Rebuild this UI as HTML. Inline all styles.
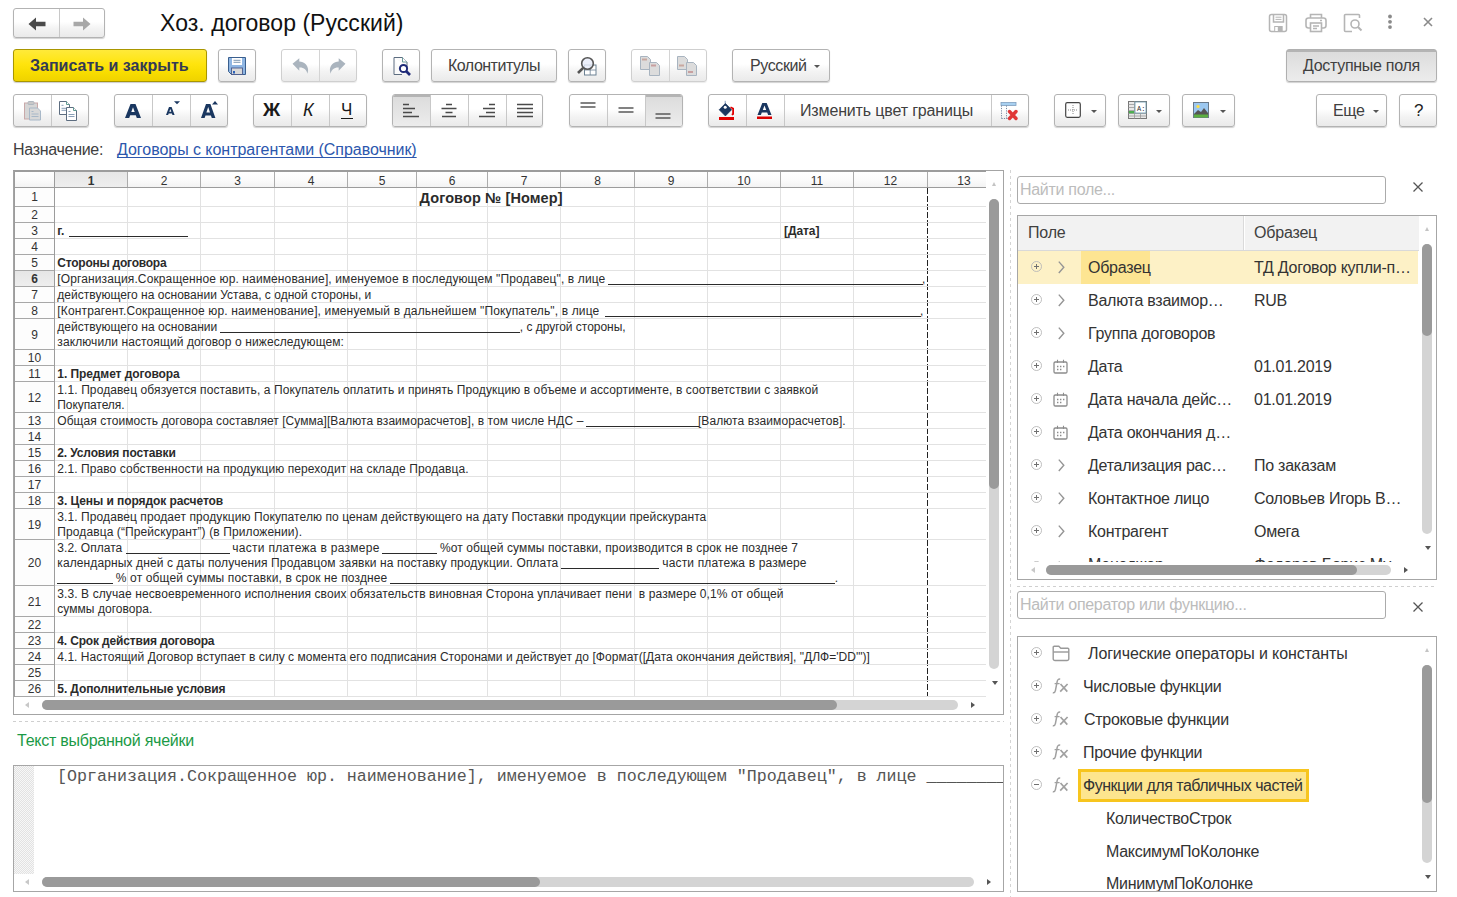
<!DOCTYPE html>
<html><head><meta charset="utf-8">
<style>
*{box-sizing:border-box}
html,body{margin:0;padding:0;background:#fff;width:1457px;height:897px;overflow:hidden;font-family:"Liberation Sans",sans-serif;color:#404040}
.a{position:absolute}
.btn{position:absolute;height:33px;top:49px;border:1px solid #b3b3b3;border-radius:3px;background:linear-gradient(#fff 0%,#fff 45%,#f3f3f3 70%,#eaeaea 100%);box-shadow:0 1px 1px rgba(0,0,0,.18);font-size:16px;color:#404040;white-space:nowrap}
.r2{top:94px}
.dv{position:absolute;top:0;bottom:0;width:1px;background:#c8c8c8}
.pr{background:linear-gradient(#b4b4b4 0,#b4b4b4 2px,#dcdcdc 2px,#e2e2e2 40%,#ececec 100%)}
.t{position:absolute;white-space:nowrap}
.dd{position:absolute;width:0;height:0;border-left:3.5px solid transparent;border-right:3.5px solid transparent;border-top:3.5px solid #555}
.c{position:absolute;white-space:pre;font-size:12px;line-height:15px;color:#2b2b2b}
.ul{position:absolute;height:1px;background:#2b2b2b}
.hn{position:absolute;height:15px;line-height:15px;font-size:12px;text-align:center;color:#333}
</style></head><body>

<!-- nav buttons -->
<div class="btn" style="left:13px;top:8px;width:92px;height:30px">
  <div class="dv" style="left:45px"></div>
  <svg class="a" style="left:13.5px;top:7.5px" width="19" height="14" viewBox="0 0 19 14"><path d="M0.5 7 L8 0.5 L8 4.7 L17.5 4.7 L17.5 9.3 L8 9.3 L8 13.5 Z" fill="#4a4a4a"/></svg>
  <svg class="a" style="left:58px;top:7.5px" width="19" height="14" viewBox="0 0 19 14"><path d="M18.5 7 L11 0.5 L11 4.7 L1.5 4.7 L1.5 9.3 L11 9.3 L11 13.5 Z" fill="#a8a8a8"/></svg>
</div>
<div class="t" style="left:160px;top:8.5px;font-size:23px;color:#111;line-height:28px;letter-spacing:0.05px">Хоз. договор (Русский)</div>

<!-- TOP RIGHT ICONS -->
<svg class="a" style="left:1268px;top:13px" width="20" height="20" viewBox="0 0 20 20" fill="none" stroke="#b5b5b5" stroke-width="1.5"><rect x="1.5" y="1.5" width="17" height="17" rx="2"/><path d="M5.5 1.5v7.5h10v-7.5"/><path d="M7.5 4.2h6M7.5 6.4h6" stroke-width="1"/><rect x="6.2" y="13" width="8.5" height="5.5" fill="#b5b5b5" stroke="none"/><rect x="7.2" y="14" width="2.6" height="4" fill="#fff" stroke="none"/></svg>
<svg class="a" style="left:1305px;top:13px" width="22" height="20" viewBox="0 0 22 20" fill="none" stroke="#b5b5b5" stroke-width="1.6"><path d="M5.5 5V1.5h11V5"/><rect x="1" y="5" width="20" height="10" rx="2.5"/><rect x="5.5" y="10" width="11" height="8.5" fill="#fff"/><path d="M8 13h6M8 15.5h4M15 7.5h2"/></svg>
<svg class="a" style="left:1343px;top:13px" width="21" height="20" viewBox="0 0 21 20" fill="none" stroke="#b5b5b5" stroke-width="1.6"><path d="M9 18.5H2.5a1 1 0 0 1-1-1V2.5a1 1 0 0 1 1-1h13a1 1 0 0 1 1 1V5"/><circle cx="12" cy="11" r="4"/><path d="M15 14l3.5 3.5" stroke-width="2"/></svg>
<svg class="a" style="left:1386px;top:14px" width="8" height="16" viewBox="0 0 8 16" fill="#8a8a8a"><circle cx="4" cy="2.5" r="1.9"/><circle cx="4" cy="7.8" r="1.9"/><circle cx="4" cy="13.1" r="1.9"/></svg>
<svg class="a" style="left:1422px;top:16px" width="12" height="12" viewBox="0 0 12 12" stroke="#8a8a8a" stroke-width="1.6"><path d="M2 2l8 8M10 2l-8 8"/></svg>

<!-- ROW 1 -->
<div class="btn" style="left:13px;width:194px;border-color:#a99600;background:linear-gradient(#ffea3a 0%,#ffe40d 45%,#f7dc00 75%,#efd200 100%);box-shadow:0 1px 1px rgba(0,0,0,.2)"></div>
<div class="t" style="left:30px;top:56px;font-size:16px;font-weight:700;color:#333a55;line-height:20px;letter-spacing:0px">Записать и закрыть</div>

<div class="btn" style="left:218px;width:38px"></div>
<svg class="a" style="left:228px;top:57px" width="18" height="18" viewBox="0 0 18 18"><path d="M0.5 0.5h17v17h-14l-3-3z" fill="#8fb6e3" stroke="#3a5f8e" stroke-width="1"/><rect x="4" y="1" width="10" height="7" fill="#fff"/><path d="M5.5 3.3h7M5.5 5.3h7" stroke="#6d8aa8" stroke-width="0.9"/><rect x="3.5" y="11" width="11" height="6.5" fill="#d9d9d9" stroke="#4a5a8a" stroke-width="0.9"/><rect x="5" y="14" width="2" height="2.5" fill="#2d62b8"/></svg>

<div class="btn" style="left:281px;width:76px;border-color:#cfcfcf;box-shadow:0 1px 1px rgba(0,0,0,.08)"><div class="dv" style="left:37px;background:#d4d4d4"></div></div>
<svg class="a" style="left:292px;top:58px" width="17" height="16" viewBox="0 0 17 16"><path d="M0.5 5.8L7.3 0.2v3.3c5 0.3 8.7 3.8 8.8 8.5c0 1.2-0.2 2.5-0.8 3.8c-0.3-3.8-3.5-6.5-8-6.3v3.3z" fill="#aab4be"/></svg>
<svg class="a" style="left:329px;top:58px" width="17" height="16" viewBox="0 0 17 16"><path d="M16.5 5.8L9.7 0.2v3.3c-5 0.3-8.7 3.8-8.8 8.5c0 1.2 0.2 2.5 0.8 3.8c0.3-3.8 3.5-6.5 8-6.3v3.3z" fill="#aab4be"/></svg>

<div class="btn" style="left:382px;width:38px"></div>
<svg class="a" style="left:393px;top:56px" width="20" height="21" viewBox="0 0 20 21"><path d="M1 1.5h8.5l4.5 4.5v5M9 18.5H1V1.5" fill="#fafafa" stroke="#5d6d80" stroke-width="1"/><path d="M9.5 1.5v4.5h4.5" fill="#fff" stroke="#6a9a9a" stroke-width="1"/><circle cx="10.5" cy="12.5" r="3.6" fill="#fff" stroke="#1e2a78" stroke-width="2"/><path d="M13 15l4 4" stroke="#1e2a78" stroke-width="2.6"/></svg>

<div class="btn" style="left:431px;width:126px"></div>
<div class="t" style="left:448px;top:57px;font-size:16px;line-height:18px;letter-spacing:-0.5px;color:#404040">Колонтитулы</div>

<div class="btn" style="left:568px;width:38px"></div>
<svg class="a" style="left:576px;top:56px" width="22" height="21" viewBox="0 0 22 21"><rect x="8.5" y="9" width="11.5" height="10" fill="#fff" stroke="#6d8294" stroke-width="1"/><path d="M14.2 9v10M8.5 14h11.5" stroke="#6d8294" stroke-width="0.8"/><circle cx="11.5" cy="7.5" r="5.8" fill="#e8ecfa" fill-opacity=".8" stroke="#555" stroke-width="1.6"/><path d="M7.2 11.8L2 17" stroke="#555" stroke-width="2.6"/></svg>

<div class="btn" style="left:631px;width:76px;border-color:#cfcfcf;box-shadow:0 1px 1px rgba(0,0,0,.08)"><div class="dv" style="left:37px;background:#d4d4d4"></div></div>
<svg class="a" style="left:640px;top:56px" width="21" height="21" viewBox="0 0 21 21"><path d="M0.5 0.5h7l3 3v10h-10z" fill="#dcdcdc" stroke="#a8b4c0"/><rect x="2" y="2.5" width="5" height="2" fill="#c8a8a0"/><path d="M9.5 6.5h7l3 3v10h-10z" fill="#dcdcdc" stroke="#a8b4c0"/><rect x="11" y="8.5" width="5" height="2" fill="#c8a0a0"/></svg>
<svg class="a" style="left:677px;top:56px" width="21" height="21" viewBox="0 0 21 21"><path d="M0.5 0.5h7l3 3v10h-10z" fill="#dcdcdc" stroke="#a8b4c0"/><rect x="2" y="8.5" width="5" height="2" fill="#c8a8a0"/><path d="M9.5 6.5h7l3 3v10h-10z" fill="#dcdcdc" stroke="#a8b4c0"/><rect x="11" y="15" width="5" height="2" fill="#c8a0a0"/></svg>

<div class="btn" style="left:732px;width:98px"></div>
<div class="t" style="left:750px;top:57px;font-size:16px;line-height:18px;letter-spacing:-0.4px;color:#404040">Русский</div>
<div class="dd" style="left:814px;top:65px"></div>

<div class="btn pr" style="left:1286px;width:151px;border-color:#b0b0b0"></div>
<div class="t" style="left:1303px;top:57px;font-size:16px;line-height:18px;letter-spacing:-0.3px;color:#404040">Доступные поля</div>

<!-- ROW 2 -->
<div class="btn r2" style="left:13px;width:76px"><div class="dv" style="left:37px"></div></div>
<svg class="a" style="left:24px;top:101px" width="18" height="20" viewBox="0 0 18 20"><rect x="0.5" y="2" width="13" height="16" fill="#d6d6d6" stroke="#c9a9a9"/><rect x="4" y="0.5" width="6" height="3" rx="1" fill="#c8c8c8" stroke="#b0b8c0"/><path d="M5.5 7h8l3 3v9h-11z" fill="#d8d8d8" stroke="#a8b8c8"/><path d="M7.5 13h7M7.5 15.5h7M7.5 10.5h2" stroke="#a8b8c8"/></svg>
<svg class="a" style="left:59px;top:101px" width="20" height="20" viewBox="0 0 20 20"><path d="M0.5 0.5h7l3 3v10h-10z" fill="#fff" stroke="#5d6d80"/><path d="M7.5 0.5v3h3" fill="#fff" stroke="#5f9a90"/><path d="M2.5 4.3h2M2.5 7.3h5M2.5 9.3h5" stroke="#8aa0b8"/><path d="M7.5 6.5h7l3 3v10h-10z" fill="#fff" stroke="#5d6d80"/><path d="M14.5 6.5v3h3" fill="#fff" stroke="#5f9a90"/><path d="M9.5 10.5h2M9.5 13.5h6M9.5 15.5h6" stroke="#8aa0b8"/></svg>

<div class="btn r2" style="left:114px;width:114px"><div class="dv" style="left:37px"></div><div class="dv" style="left:75px"></div></div>
<svg class="a" style="left:124px;top:103px" width="18" height="16" viewBox="0 0 18 16"><path d="M1 15L6.5 1h5L17 15h-4.2l-1-2.8H6.2L5.2 15z M7.3 9h3.4L9 4.3z" fill="#1a3760" fill-rule="evenodd"/></svg>
<svg class="a" style="left:165px;top:100px" width="16" height="16" viewBox="0 0 16 16"><path d="M1 15L4 7h2.6l3 8H7.5l-.6-1.6H3.7L3.1 15z M4.3 11.8h2L5.3 9z" fill="#1a3760" fill-rule="evenodd"/><path d="M9 1.2h6l-3 3z" fill="#1a3760"/></svg>
<svg class="a" style="left:200px;top:100px" width="19" height="19" viewBox="0 0 19 19"><path d="M1 18L6 4h4.4L15.4 18h-3.6l-.9-2.6H5.5L4.6 18z M6.4 12.4h3.6L8.2 7z" fill="#1a3760" fill-rule="evenodd"/><path d="M12 4.5l3-3.4l3 3.4z" fill="#1a3760"/></svg>

<div class="btn r2" style="left:253px;width:114px"><div class="dv" style="left:37px"></div><div class="dv" style="left:75px"></div></div>
<div class="t" style="left:263px;top:100px;font-size:19px;font-weight:700;color:#1a1a1a;line-height:20px">Ж</div>
<div class="t" style="left:303px;top:100px;font-size:18px;font-style:italic;color:#1a1a1a;line-height:20px">К</div>
<div class="t" style="left:341px;top:100px;font-size:17px;color:#1a1a1a;line-height:20px">Ч</div>
<div class="a" style="left:341px;top:117.5px;width:12px;height:1.6px;background:#1a1a1a"></div>

<div class="btn r2" style="left:392px;width:151px"><div class="a pr" style="left:0;top:0;width:37px;height:31px;border-radius:2px 0 0 2px"></div><div class="dv" style="left:37px"></div><div class="dv" style="left:75px"></div><div class="dv" style="left:113px"></div></div>
<svg class="a" style="left:401px;top:103px" width="20" height="16" viewBox="0 0 20 16" stroke="#4a4a4a" stroke-width="1.5"><path d="M2 1.5h6M2 5.5h12M2 9.5h9M2 13.5h16"/></svg>
<svg class="a" style="left:439px;top:103px" width="20" height="16" viewBox="0 0 20 16" stroke="#4a4a4a" stroke-width="1.5"><path d="M7 1.5h6M2.5 5.5h15M6.5 9.5h7M3 13.5h14"/></svg>
<svg class="a" style="left:477px;top:103px" width="20" height="16" viewBox="0 0 20 16" stroke="#4a4a4a" stroke-width="1.5"><path d="M12 1.5h6M6 5.5h12M9 9.5h9M2 13.5h16"/></svg>
<svg class="a" style="left:515px;top:103px" width="20" height="16" viewBox="0 0 20 16" stroke="#4a4a4a" stroke-width="1.5"><path d="M2 1.5h16M2 5.5h16M2 9.5h16M2 13.5h16"/></svg>

<div class="btn r2" style="left:569px;width:114px"><div class="a pr" style="left:76px;top:0;width:36px;height:31px;border-radius:0 2px 2px 0"></div><div class="dv" style="left:37px"></div><div class="dv" style="left:75px"></div></div>
<svg class="a" style="left:580px;top:102px" width="16" height="7" viewBox="0 0 16 7" stroke="#5a5a5a" stroke-width="1.3"><path d="M0.5 1h15M0.5 5h15"/></svg>
<svg class="a" style="left:618px;top:107px" width="16" height="7" viewBox="0 0 16 7" stroke="#5a5a5a" stroke-width="1.3"><path d="M0.5 1h15M0.5 5h15"/></svg>
<svg class="a" style="left:655px;top:113px" width="16" height="7" viewBox="0 0 16 7" stroke="#5a5a5a" stroke-width="1.3"><path d="M0.5 1h15M0.5 5h15"/></svg>

<div class="btn r2" style="left:708px;width:321px"><div class="dv" style="left:37px"></div><div class="dv" style="left:75px"></div><div class="dv" style="left:282px"></div></div>
<svg class="a" style="left:717px;top:100px" width="20" height="21" viewBox="0 0 20 21"><path d="M8.2 0.8v3" stroke="#8aa0c0" stroke-width="1"/><path d="M8.4 3.5L14.6 9.7L8.4 15.9L2.2 9.7z" fill="#1a3760" stroke="#1a3760" stroke-width="0.8" stroke-linejoin="round"/><circle cx="8.2" cy="7.3" r="1.5" fill="#fff"/><path d="M13.5 7.2l2.6 1.3v5.5l-1.3 0.8" stroke="#e00000" stroke-width="1.8" fill="none"/><rect x="2" y="17" width="15" height="3" fill="#e00000"/></svg>
<svg class="a" style="left:756px;top:101px" width="17" height="19" viewBox="0 0 17 19"><path d="M1.5 14L6.3 2h4.4l4.8 12h-3.4l-.9-2.4H5.8L4.9 14z M6.8 9h3.4L8.5 4.6z" fill="#1a3760" fill-rule="evenodd"/><rect x="1" y="15.5" width="15" height="2.5" fill="#d90000"/></svg>
<div class="t" style="left:800px;top:102px;font-size:16px;line-height:18px;letter-spacing:-0.15px;color:#404040">Изменить цвет границы</div>
<svg class="a" style="left:999px;top:101px" width="22" height="21" viewBox="0 0 22 21"><rect x="2" y="1.5" width="15" height="3" fill="#a8d0f0" stroke="#7f9fbf" stroke-width="0.8"/><path d="M2.5 4.5v13M7.5 4.5v13M2.5 17.5h7" stroke="#7a8aa0" stroke-width="1" stroke-dasharray="1.2 1.2"/><path d="M10.5 10.5l6.5 7M17 10.5l-6.5 7" stroke="#e03838" stroke-width="3.4" stroke-linecap="round"/></svg>

<div class="btn r2" style="left:1054px;width:52px"></div>
<svg class="a" style="left:1065px;top:102px" width="16" height="16" viewBox="0 0 16 16"><rect x="0.7" y="0.7" width="14.6" height="14.6" rx="1.5" fill="#fff" stroke="#444" stroke-width="1.2"/><path d="M8 3v10M3 8h10" stroke="#888" stroke-width="1" stroke-dasharray="1 1"/></svg>
<div class="dd" style="left:1091px;top:110px"></div>

<div class="btn r2" style="left:1118px;width:52px"></div>
<svg class="a" style="left:1128px;top:101px" width="19" height="18" viewBox="0 0 19 18"><rect x="0.5" y="0.5" width="18" height="17" fill="#e8e8e8" stroke="#777" stroke-width="1"/><path d="M0.5 3.5h6M0.5 6.5h6M0.5 9.5h6M0.5 12.5h18M0.5 15h18M6.5 0.5v17M12.5 12.5v5" stroke="#999" stroke-width="0.8"/><rect x="7" y="1" width="11" height="11" fill="#fff" stroke="#6a9ab0" stroke-width="0.8"/><text x="9" y="9.5" font-size="7" font-family="Liberation Mono" fill="#333">A:</text><rect x="1" y="10" width="5" height="2.3" fill="#4caf50"/></svg>
<div class="dd" style="left:1156px;top:110px"></div>

<div class="btn r2" style="left:1182px;width:53px"></div>
<svg class="a" style="left:1193px;top:102px" width="16" height="16" viewBox="0 0 16 16"><rect x="0.5" y="0.5" width="15" height="15" fill="#9cc8f0" stroke="#6a7a8a" stroke-width="1"/><circle cx="5" cy="4.5" r="1.6" fill="#ffe040"/><path d="M1 12l4-4 3 2 3-4 4 5v2H1z" fill="#555"/><rect x="1" y="12.5" width="14" height="3" fill="#5cb040"/></svg>
<div class="dd" style="left:1220px;top:110px"></div>

<div class="btn r2" style="left:1316px;width:71px"></div>
<div class="t" style="left:1333px;top:102px;font-size:16px;line-height:18px;color:#404040;letter-spacing:-0.3px">Еще</div>
<div class="dd" style="left:1373px;top:110px"></div>

<div class="btn r2" style="left:1399px;width:38px"></div>
<div class="t" style="left:1414px;top:101px;font-size:17px;line-height:20px;color:#222">?</div>

<!-- Назначение -->
<div class="t" style="left:13px;top:141px;font-size:16px;line-height:18px;letter-spacing:-0.3px;color:#404040">Назначение:</div>
<div class="t" style="left:117px;top:141px;font-size:16px;line-height:18px;letter-spacing:-0.04px;color:#2c57ad;text-decoration:underline;text-decoration-skip-ink:none;text-underline-offset:2px;text-decoration-thickness:1px">Договоры с контрагентами (Справочник)</div>

<div class="a" style="left:13px;top:170px;width:991px;height:545px;border:1px solid #a4a4a4"></div>
<div class="a" style="left:14px;top:171px;width:972px;height:1px;background:#9c9c9c"></div>
<div class="a" style="left:14px;top:171px;width:1px;height:526px;background:#9c9c9c"></div>
<div class="a" style="left:13px;top:170px;width:973px;height:1px;background:#9c9c9c"></div>
<div class="a" style="left:15px;top:172px;width:971px;height:15px;background:linear-gradient(#fff,#fafafa 60%,#f3f3f3)"></div>
<div class="a" style="left:55px;top:172px;width:72px;height:15px;background:linear-gradient(#e6e6e6,#eeeeee)"></div>
<div class="a" style="left:15px;top:188px;width:39px;height:508px;background:#fdfdfd"></div>
<div class="a" style="left:15px;top:271px;width:39px;height:15px;background:linear-gradient(#e6e6e6,#eeeeee)"></div>
<div class="a" style="left:127px;top:188px;width:1px;height:509px;background:#e2e2e2"></div>
<div class="a" style="left:200px;top:188px;width:1px;height:509px;background:#e2e2e2"></div>
<div class="a" style="left:274px;top:188px;width:1px;height:509px;background:#e2e2e2"></div>
<div class="a" style="left:347px;top:188px;width:1px;height:509px;background:#e2e2e2"></div>
<div class="a" style="left:416px;top:188px;width:1px;height:509px;background:#e2e2e2"></div>
<div class="a" style="left:487px;top:188px;width:1px;height:509px;background:#e2e2e2"></div>
<div class="a" style="left:560px;top:188px;width:1px;height:509px;background:#e2e2e2"></div>
<div class="a" style="left:634px;top:188px;width:1px;height:509px;background:#e2e2e2"></div>
<div class="a" style="left:707px;top:188px;width:1px;height:509px;background:#e2e2e2"></div>
<div class="a" style="left:780px;top:188px;width:1px;height:509px;background:#e2e2e2"></div>
<div class="a" style="left:853px;top:188px;width:1px;height:509px;background:#e2e2e2"></div>
<div class="a" style="left:927px;top:188px;width:1px;height:509px;background:repeating-linear-gradient(#222 0 6px,transparent 6px 8px)"></div>
<div class="a" style="left:55px;top:206px;width:931px;height:1px;background:#e2e2e2"></div>
<div class="a" style="left:15px;top:206px;width:39px;height:1px;background:#a8a8a8"></div>
<div class="a" style="left:55px;top:222px;width:931px;height:1px;background:#e2e2e2"></div>
<div class="a" style="left:15px;top:222px;width:39px;height:1px;background:#a8a8a8"></div>
<div class="a" style="left:55px;top:238px;width:931px;height:1px;background:#e2e2e2"></div>
<div class="a" style="left:15px;top:238px;width:39px;height:1px;background:#a8a8a8"></div>
<div class="a" style="left:55px;top:254px;width:931px;height:1px;background:#e2e2e2"></div>
<div class="a" style="left:15px;top:254px;width:39px;height:1px;background:#a8a8a8"></div>
<div class="a" style="left:55px;top:270px;width:931px;height:1px;background:#e2e2e2"></div>
<div class="a" style="left:15px;top:270px;width:39px;height:1px;background:#a8a8a8"></div>
<div class="a" style="left:55px;top:286px;width:931px;height:1px;background:#e2e2e2"></div>
<div class="a" style="left:15px;top:286px;width:39px;height:1px;background:#a8a8a8"></div>
<div class="a" style="left:55px;top:302px;width:931px;height:1px;background:#e2e2e2"></div>
<div class="a" style="left:15px;top:302px;width:39px;height:1px;background:#a8a8a8"></div>
<div class="a" style="left:55px;top:318px;width:931px;height:1px;background:#e2e2e2"></div>
<div class="a" style="left:15px;top:318px;width:39px;height:1px;background:#a8a8a8"></div>
<div class="a" style="left:55px;top:349px;width:931px;height:1px;background:#e2e2e2"></div>
<div class="a" style="left:15px;top:349px;width:39px;height:1px;background:#a8a8a8"></div>
<div class="a" style="left:55px;top:365px;width:931px;height:1px;background:#e2e2e2"></div>
<div class="a" style="left:15px;top:365px;width:39px;height:1px;background:#a8a8a8"></div>
<div class="a" style="left:55px;top:381px;width:931px;height:1px;background:#e2e2e2"></div>
<div class="a" style="left:15px;top:381px;width:39px;height:1px;background:#a8a8a8"></div>
<div class="a" style="left:55px;top:412px;width:931px;height:1px;background:#e2e2e2"></div>
<div class="a" style="left:15px;top:412px;width:39px;height:1px;background:#a8a8a8"></div>
<div class="a" style="left:55px;top:428px;width:931px;height:1px;background:#e2e2e2"></div>
<div class="a" style="left:15px;top:428px;width:39px;height:1px;background:#a8a8a8"></div>
<div class="a" style="left:55px;top:444px;width:931px;height:1px;background:#e2e2e2"></div>
<div class="a" style="left:15px;top:444px;width:39px;height:1px;background:#a8a8a8"></div>
<div class="a" style="left:55px;top:460px;width:931px;height:1px;background:#e2e2e2"></div>
<div class="a" style="left:15px;top:460px;width:39px;height:1px;background:#a8a8a8"></div>
<div class="a" style="left:55px;top:476px;width:931px;height:1px;background:#e2e2e2"></div>
<div class="a" style="left:15px;top:476px;width:39px;height:1px;background:#a8a8a8"></div>
<div class="a" style="left:55px;top:492px;width:931px;height:1px;background:#e2e2e2"></div>
<div class="a" style="left:15px;top:492px;width:39px;height:1px;background:#a8a8a8"></div>
<div class="a" style="left:55px;top:508px;width:931px;height:1px;background:#e2e2e2"></div>
<div class="a" style="left:15px;top:508px;width:39px;height:1px;background:#a8a8a8"></div>
<div class="a" style="left:55px;top:539px;width:931px;height:1px;background:#e2e2e2"></div>
<div class="a" style="left:15px;top:539px;width:39px;height:1px;background:#a8a8a8"></div>
<div class="a" style="left:55px;top:585px;width:931px;height:1px;background:#e2e2e2"></div>
<div class="a" style="left:15px;top:585px;width:39px;height:1px;background:#a8a8a8"></div>
<div class="a" style="left:55px;top:616px;width:931px;height:1px;background:#e2e2e2"></div>
<div class="a" style="left:15px;top:616px;width:39px;height:1px;background:#a8a8a8"></div>
<div class="a" style="left:55px;top:632px;width:931px;height:1px;background:#e2e2e2"></div>
<div class="a" style="left:15px;top:632px;width:39px;height:1px;background:#a8a8a8"></div>
<div class="a" style="left:55px;top:648px;width:931px;height:1px;background:#e2e2e2"></div>
<div class="a" style="left:15px;top:648px;width:39px;height:1px;background:#a8a8a8"></div>
<div class="a" style="left:55px;top:664px;width:931px;height:1px;background:#e2e2e2"></div>
<div class="a" style="left:15px;top:664px;width:39px;height:1px;background:#a8a8a8"></div>
<div class="a" style="left:55px;top:680px;width:931px;height:1px;background:#e2e2e2"></div>
<div class="a" style="left:15px;top:680px;width:39px;height:1px;background:#a8a8a8"></div>
<div class="a" style="left:55px;top:696px;width:931px;height:1px;background:#e2e2e2"></div>
<div class="a" style="left:15px;top:696px;width:39px;height:1px;background:#a8a8a8"></div>
<div class="a" style="left:127px;top:172px;width:1px;height:15px;background:#acacac"></div>
<div class="a" style="left:200px;top:172px;width:1px;height:15px;background:#acacac"></div>
<div class="a" style="left:274px;top:172px;width:1px;height:15px;background:#acacac"></div>
<div class="a" style="left:347px;top:172px;width:1px;height:15px;background:#acacac"></div>
<div class="a" style="left:416px;top:172px;width:1px;height:15px;background:#acacac"></div>
<div class="a" style="left:487px;top:172px;width:1px;height:15px;background:#acacac"></div>
<div class="a" style="left:560px;top:172px;width:1px;height:15px;background:#acacac"></div>
<div class="a" style="left:634px;top:172px;width:1px;height:15px;background:#acacac"></div>
<div class="a" style="left:707px;top:172px;width:1px;height:15px;background:#acacac"></div>
<div class="a" style="left:780px;top:172px;width:1px;height:15px;background:#acacac"></div>
<div class="a" style="left:853px;top:172px;width:1px;height:15px;background:#acacac"></div>
<div class="a" style="left:927px;top:172px;width:1px;height:15px;background:#acacac"></div>
<div class="a" style="left:15px;top:187px;width:971px;height:1px;background:#9c9c9c"></div>
<div class="a" style="left:54px;top:172px;width:1px;height:525px;background:#9c9c9c"></div>
<div class="hn" style="left:55px;width:72px;top:174px;font-weight:700">1</div>
<div class="hn" style="left:128px;width:72px;top:174px">2</div>
<div class="hn" style="left:201px;width:73px;top:174px">3</div>
<div class="hn" style="left:275px;width:72px;top:174px">4</div>
<div class="hn" style="left:348px;width:68px;top:174px">5</div>
<div class="hn" style="left:417px;width:70px;top:174px">6</div>
<div class="hn" style="left:488px;width:72px;top:174px">7</div>
<div class="hn" style="left:561px;width:73px;top:174px">8</div>
<div class="hn" style="left:635px;width:72px;top:174px">9</div>
<div class="hn" style="left:708px;width:72px;top:174px">10</div>
<div class="hn" style="left:781px;width:72px;top:174px">11</div>
<div class="hn" style="left:854px;width:73px;top:174px">12</div>
<div class="hn" style="left:928px;width:72px;top:174px">13</div>
<div class="hn" style="left:15px;width:39px;top:188px;height:18px;line-height:18px">1</div>
<div class="hn" style="left:15px;width:39px;top:208px;height:15px;line-height:15px">2</div>
<div class="hn" style="left:15px;width:39px;top:224px;height:15px;line-height:15px">3</div>
<div class="hn" style="left:15px;width:39px;top:240px;height:15px;line-height:15px">4</div>
<div class="hn" style="left:15px;width:39px;top:256px;height:15px;line-height:15px">5</div>
<div class="hn" style="left:15px;width:39px;top:272px;height:15px;line-height:15px;font-weight:700">6</div>
<div class="hn" style="left:15px;width:39px;top:288px;height:15px;line-height:15px">7</div>
<div class="hn" style="left:15px;width:39px;top:304px;height:15px;line-height:15px">8</div>
<div class="hn" style="left:15px;width:39px;top:320px;height:30px;line-height:30px">9</div>
<div class="hn" style="left:15px;width:39px;top:351px;height:15px;line-height:15px">10</div>
<div class="hn" style="left:15px;width:39px;top:367px;height:15px;line-height:15px">11</div>
<div class="hn" style="left:15px;width:39px;top:383px;height:30px;line-height:30px">12</div>
<div class="hn" style="left:15px;width:39px;top:414px;height:15px;line-height:15px">13</div>
<div class="hn" style="left:15px;width:39px;top:430px;height:15px;line-height:15px">14</div>
<div class="hn" style="left:15px;width:39px;top:446px;height:15px;line-height:15px">15</div>
<div class="hn" style="left:15px;width:39px;top:462px;height:15px;line-height:15px">16</div>
<div class="hn" style="left:15px;width:39px;top:478px;height:15px;line-height:15px">17</div>
<div class="hn" style="left:15px;width:39px;top:494px;height:15px;line-height:15px">18</div>
<div class="hn" style="left:15px;width:39px;top:510px;height:30px;line-height:30px">19</div>
<div class="hn" style="left:15px;width:39px;top:541px;height:45px;line-height:45px">20</div>
<div class="hn" style="left:15px;width:39px;top:587px;height:30px;line-height:30px">21</div>
<div class="hn" style="left:15px;width:39px;top:618px;height:15px;line-height:15px">22</div>
<div class="hn" style="left:15px;width:39px;top:634px;height:15px;line-height:15px">23</div>
<div class="hn" style="left:15px;width:39px;top:650px;height:15px;line-height:15px">24</div>
<div class="hn" style="left:15px;width:39px;top:666px;height:15px;line-height:15px">25</div>
<div class="hn" style="left:15px;width:39px;top:682px;height:15px;line-height:15px">26</div>
<div class="a" style="left:989px;top:199px;width:10px;height:470px;border-radius:5px;background:#d4d4d4"></div>
<div class="a" style="left:989px;top:199px;width:10px;height:290px;border-radius:5px;background:#9a9a9a"></div>
<div class="a" style="left:992px;top:182px;width:0;height:0;border-left:2.5px solid transparent;border-right:2.5px solid transparent;border-bottom:4.5px solid #c4c4c4"></div>
<div class="a" style="left:992px;top:681px;width:0;height:0;border-left:3px solid transparent;border-right:3px solid transparent;border-top:4px solid #555"></div>
<div class="a" style="left:42px;top:700px;width:916px;height:10px;border-radius:5px;background:#d4d4d4"></div>
<div class="a" style="left:42px;top:700px;width:795px;height:10px;border-radius:5px;background:#9a9a9a"></div>
<div class="a" style="left:25px;top:702px;width:0;height:0;border-top:3px solid transparent;border-bottom:3px solid transparent;border-right:4px solid #c8c8c8"></div>
<div class="a" style="left:971px;top:702px;width:0;height:0;border-top:3px solid transparent;border-bottom:3px solid transparent;border-left:4px solid #555"></div>
<div class="c" style="left:419.6px;top:191.2px;font-weight:700;font-size:14.5px;letter-spacing:0.114px">Договор № [Номер]</div>
<div class="c" style="left:57.3px;top:224.0px;font-weight:700">г.</div>
<div class="c" style="left:784.1px;top:224.0px;font-weight:700;letter-spacing:-0.093px">[Дата]</div>
<div class="c" style="left:57.3px;top:256.0px;font-weight:700;letter-spacing:-0.238px">Стороны договора</div>
<div class="c" style="left:57.3px;top:272.0px;letter-spacing:0.117px">[Организация.Сокращенное юр. наименование], именуемое в последующем "Продавец", в лице</div>
<div class="c" style="left:922.1px;top:272.0px">,</div>
<div class="c" style="left:57.3px;top:288.0px;letter-spacing:0.021px">действующего на основании Устава, с одной стороны, и</div>
<div class="c" style="left:57.3px;top:304.0px;letter-spacing:0.142px">[Контрагент.Сокращенное юр. наименование], именуемый в дальнейшем "Покупатель", в лице</div>
<div class="c" style="left:920.0px;top:304.0px">,</div>
<div class="c" style="left:57.3px;top:320.0px;letter-spacing:0.038px">действующего на основании</div>
<div class="c" style="left:519.8px;top:320.0px;letter-spacing:-0.030px">, с другой стороны,</div>
<div class="c" style="left:57.3px;top:335.0px;letter-spacing:0.094px">заключили настоящий договор о нижеследующем:</div>
<div class="c" style="left:57.3px;top:367.0px;font-weight:700;letter-spacing:-0.076px">1. Предмет договора</div>
<div class="c" style="left:57.3px;top:383.0px;letter-spacing:0.100px">1.1. Продавец обязуется поставить, а Покупатель оплатить и принять Продукцию в объеме и ассортименте, в соответствии с заявкой</div>
<div class="c" style="left:57.3px;top:398.0px;letter-spacing:-0.086px">Покупателя.</div>
<div class="c" style="left:57.3px;top:414.0px;letter-spacing:0.055px">Общая стоимость договора составляет [Сумма][Валюта взаиморасчетов], в том числе НДС –</div>
<div class="c" style="left:697.9px;top:414.0px;letter-spacing:0.079px">[Валюта взаиморасчетов].</div>
<div class="c" style="left:57.3px;top:446.0px;font-weight:700;letter-spacing:-0.140px">2. Условия поставки</div>
<div class="c" style="left:57.3px;top:462.0px;letter-spacing:0.082px">2.1. Право собственности на продукцию переходит на складе Продавца.</div>
<div class="c" style="left:57.3px;top:494.0px;font-weight:700;letter-spacing:-0.076px">3. Цены и порядок расчетов</div>
<div class="c" style="left:57.3px;top:510.0px;letter-spacing:0.086px">3.1. Продавец продает продукцию Покупателю по ценам действующего на дату Поставки продукции прейскуранта</div>
<div class="c" style="left:57.3px;top:525.0px;letter-spacing:0.100px">Продавца (“Прейскурант”) (в Приложении).</div>
<div class="c" style="left:57.3px;top:541.0px;letter-spacing:0.036px">3.2. Оплата</div>
<div class="c" style="left:232.3px;top:541.0px;letter-spacing:0.273px">части платежа в размере</div>
<div class="c" style="left:439.9px;top:541.0px;letter-spacing:0.113px">%от общей суммы поставки, производится в срок не позднее 7</div>
<div class="c" style="left:57.3px;top:556.0px;letter-spacing:0.113px">календарных дней с даты получения Продавцом заявки на поставку продукции. Оплата</div>
<div class="c" style="left:662.3px;top:556.0px;letter-spacing:0.145px">части платежа в размере</div>
<div class="c" style="left:115.8px;top:571.0px;letter-spacing:0.144px">% от общей суммы поставки, в срок не позднее</div>
<div class="c" style="left:834.8px;top:571.0px">.</div>
<div class="c" style="left:57.3px;top:587.0px;letter-spacing:0.094px">3.3. В случае несвоевременного исполнения своих обязательств виновная Сторона уплачивает пени  в размере 0,1% от общей</div>
<div class="c" style="left:57.3px;top:602.0px;letter-spacing:0.044px">суммы договора.</div>
<div class="c" style="left:57.3px;top:634.0px;font-weight:700;letter-spacing:-0.158px">4. Срок действия договора</div>
<div class="c" style="left:57.3px;top:650.0px;letter-spacing:0.036px">4.1. Настоящий Договор вступает в силу с момента его подписания Сторонами и действует до [Формат([Дата окончания действия], "ДЛФ='DD'")]</div>
<div class="c" style="left:57.3px;top:682.0px;font-weight:700;letter-spacing:-0.094px">5. Дополнительные условия</div>
<div class="ul" style="left:68.7px;top:236px;width:119.3px"></div>
<div class="ul" style="left:608.0px;top:284px;width:314.8px"></div>
<div class="ul" style="left:604.8px;top:316px;width:315.9px"></div>
<div class="ul" style="left:220.2px;top:332px;width:300.3px"></div>
<div class="ul" style="left:586.1px;top:426px;width:112.5px"></div>
<div class="ul" style="left:125.5px;top:553px;width:104.3px"></div>
<div class="ul" style="left:382.2px;top:553px;width:54.6px"></div>
<div class="ul" style="left:561.4px;top:568px;width:97.4px"></div>
<div class="ul" style="left:56.9px;top:583px;width:56.2px"></div>
<div class="ul" style="left:390.4px;top:583px;width:445.1px"></div>
<!-- horizontal dashed separator below sheet -->
<div class="a" style="left:13px;top:721px;width:991px;height:1px;background:repeating-linear-gradient(90deg,#cfcfcf 0 3px,transparent 3px 6px)"></div>
<div class="t" style="left:17px;top:732px;font-size:16px;line-height:18px;color:#1b9a46;letter-spacing:-0.25px">Текст выбранной ячейки</div>
<!-- text area -->
<div class="a" style="left:13px;top:765px;width:991px;height:127px;border:1px solid #a6a6a6;overflow:hidden">
  <div class="a" style="left:0;top:0;width:20px;height:108px;background:repeating-conic-gradient(#e2e2e2 0 25%,#f7f7f7 0 50%) 0 0/2px 2px"></div>
  <div class="a" style="left:43px;top:1px;white-space:pre;font-family:'Liberation Mono',monospace;font-size:16.67px;line-height:20px;color:#555">[Организация.Сокращенное юр. наименование], именуемое в последующем "Продавец", в лице ______________________</div>
  <div class="a" style="left:28px;top:111px;width:932px;height:10px;border-radius:5px;background:#d4d4d4"></div>
  <div class="a" style="left:28px;top:111px;width:498px;height:10px;border-radius:5px;background:#9a9a9a"></div>
  <div class="a" style="left:11px;top:113px;width:0;height:0;border-top:3px solid transparent;border-bottom:3px solid transparent;border-right:4px solid #c8c8c8"></div>
  <div class="a" style="left:973px;top:113px;width:0;height:0;border-top:3px solid transparent;border-bottom:3px solid transparent;border-left:4px solid #555"></div>
</div>
<!-- vertical dashed separator -->
<div class="a" style="left:1010px;top:170px;width:1px;height:727px;background:repeating-linear-gradient(#d4d4d4 0 3px,transparent 3px 6px)"></div>

<div class="a" style="left:1017px;top:176px;width:369px;height:28px;border:1px solid #ababab;border-radius:3px;background:#fff"></div>
<div class="t" style="left:1020px;top:180px;font-size:16px;line-height:20px;color:#bcbcbc;letter-spacing:-0.3px">Найти поле...</div>
<svg class="a" style="left:1412px;top:181px" width="12" height="12" viewBox="0 0 12 12" stroke="#555" stroke-width="1.3"><path d="M1.5 1.5l9 9M10.5 1.5l-9 9"/></svg>
<div class="a" style="left:1017px;top:215px;width:420px;height:365px;border:1px solid #a6a6a6;background:#fff;overflow:hidden"><div class="a" style="left:0;top:0;width:401px;height:34px;background:#f2f2f2"></div><div class="a" style="left:0;top:34px;width:401px;height:1px;background:#d9d9d9"></div><div class="a" style="left:225px;top:0;width:1px;height:34px;background:#dadada"></div><div class="a" style="left:226px;top:0;width:1px;height:34px;background:#fff"></div></div>
<div class="t" style="left:1028px;top:223px;font-size:16px;line-height:20px;color:#404040;letter-spacing:-0.2px">Поле</div>
<div class="t" style="left:1254px;top:223px;font-size:16px;line-height:20px;color:#404040;letter-spacing:-0.2px">Образец</div>
<div class="a" style="left:1018px;top:251px;width:400px;height:33px;background:#fdf1c6"></div>
<div class="a" style="left:1081px;top:251px;width:69px;height:33px;background:#fde592"></div>
<svg class="a" style="left:1030px;top:260px" width="12" height="12" viewBox="0 0 12 12"><circle cx="6.5" cy="6.5" r="5" fill="none" stroke="#b8b8b8" stroke-width="0.9"/><path d="M4 6.5h5M6.5 4v5" stroke="#707070" stroke-width="1"/></svg>
<svg class="a" style="left:1057px;top:261px" width="9" height="13" viewBox="0 0 9 13"><path d="M1.8 0.6L6.8 6.3L1.8 12" fill="none" stroke="#959595" stroke-width="1.4"/></svg>
<div class="t" style="left:1088px;top:258px;font-size:16px;line-height:20px;color:#333;letter-spacing:-0.25px">Образец</div>
<div class="t" style="left:1254px;top:258px;font-size:16px;line-height:20px;color:#333;letter-spacing:-0.25px">ТД Договор купли-п…</div>
<svg class="a" style="left:1030px;top:293px" width="12" height="12" viewBox="0 0 12 12"><circle cx="6.5" cy="6.5" r="5" fill="none" stroke="#b8b8b8" stroke-width="0.9"/><path d="M4 6.5h5M6.5 4v5" stroke="#707070" stroke-width="1"/></svg>
<svg class="a" style="left:1057px;top:294px" width="9" height="13" viewBox="0 0 9 13"><path d="M1.8 0.6L6.8 6.3L1.8 12" fill="none" stroke="#959595" stroke-width="1.4"/></svg>
<div class="t" style="left:1088px;top:291px;font-size:16px;line-height:20px;color:#333;letter-spacing:-0.25px">Валюта взаимор…</div>
<div class="t" style="left:1254px;top:291px;font-size:16px;line-height:20px;color:#333;letter-spacing:-0.25px">RUB</div>
<svg class="a" style="left:1030px;top:326px" width="12" height="12" viewBox="0 0 12 12"><circle cx="6.5" cy="6.5" r="5" fill="none" stroke="#b8b8b8" stroke-width="0.9"/><path d="M4 6.5h5M6.5 4v5" stroke="#707070" stroke-width="1"/></svg>
<svg class="a" style="left:1057px;top:327px" width="9" height="13" viewBox="0 0 9 13"><path d="M1.8 0.6L6.8 6.3L1.8 12" fill="none" stroke="#959595" stroke-width="1.4"/></svg>
<div class="t" style="left:1088px;top:324px;font-size:16px;line-height:20px;color:#333;letter-spacing:-0.25px">Группа договоров</div>
<svg class="a" style="left:1030px;top:359px" width="12" height="12" viewBox="0 0 12 12"><circle cx="6.5" cy="6.5" r="5" fill="none" stroke="#b8b8b8" stroke-width="0.9"/><path d="M4 6.5h5M6.5 4v5" stroke="#707070" stroke-width="1"/></svg>
<svg class="a" style="left:1053px;top:359px" width="15" height="15" viewBox="0 0 15 15"><rect x="1" y="3" width="13" height="11" rx="1.3" fill="none" stroke="#8c8c8c" stroke-width="1.3"/><path d="M4.5 0.8v3.2M10.5 0.8v3.2" stroke="#8c8c8c" stroke-width="1.1"/><path d="M4 7.5h1.4M7 7.5h1.4M10 7.5h1.4M4 10.5h1.4M7 10.5h1.4" stroke="#8c8c8c" stroke-width="1.3"/></svg>
<div class="t" style="left:1088px;top:357px;font-size:16px;line-height:20px;color:#333;letter-spacing:-0.25px">Дата</div>
<div class="t" style="left:1254px;top:357px;font-size:16px;line-height:20px;color:#333;letter-spacing:-0.25px">01.01.2019</div>
<svg class="a" style="left:1030px;top:392px" width="12" height="12" viewBox="0 0 12 12"><circle cx="6.5" cy="6.5" r="5" fill="none" stroke="#b8b8b8" stroke-width="0.9"/><path d="M4 6.5h5M6.5 4v5" stroke="#707070" stroke-width="1"/></svg>
<svg class="a" style="left:1053px;top:392px" width="15" height="15" viewBox="0 0 15 15"><rect x="1" y="3" width="13" height="11" rx="1.3" fill="none" stroke="#8c8c8c" stroke-width="1.3"/><path d="M4.5 0.8v3.2M10.5 0.8v3.2" stroke="#8c8c8c" stroke-width="1.1"/><path d="M4 7.5h1.4M7 7.5h1.4M10 7.5h1.4M4 10.5h1.4M7 10.5h1.4" stroke="#8c8c8c" stroke-width="1.3"/></svg>
<div class="t" style="left:1088px;top:390px;font-size:16px;line-height:20px;color:#333;letter-spacing:-0.25px">Дата начала дейс…</div>
<div class="t" style="left:1254px;top:390px;font-size:16px;line-height:20px;color:#333;letter-spacing:-0.25px">01.01.2019</div>
<svg class="a" style="left:1030px;top:425px" width="12" height="12" viewBox="0 0 12 12"><circle cx="6.5" cy="6.5" r="5" fill="none" stroke="#b8b8b8" stroke-width="0.9"/><path d="M4 6.5h5M6.5 4v5" stroke="#707070" stroke-width="1"/></svg>
<svg class="a" style="left:1053px;top:425px" width="15" height="15" viewBox="0 0 15 15"><rect x="1" y="3" width="13" height="11" rx="1.3" fill="none" stroke="#8c8c8c" stroke-width="1.3"/><path d="M4.5 0.8v3.2M10.5 0.8v3.2" stroke="#8c8c8c" stroke-width="1.1"/><path d="M4 7.5h1.4M7 7.5h1.4M10 7.5h1.4M4 10.5h1.4M7 10.5h1.4" stroke="#8c8c8c" stroke-width="1.3"/></svg>
<div class="t" style="left:1088px;top:423px;font-size:16px;line-height:20px;color:#333;letter-spacing:-0.25px">Дата окончания д…</div>
<svg class="a" style="left:1030px;top:458px" width="12" height="12" viewBox="0 0 12 12"><circle cx="6.5" cy="6.5" r="5" fill="none" stroke="#b8b8b8" stroke-width="0.9"/><path d="M4 6.5h5M6.5 4v5" stroke="#707070" stroke-width="1"/></svg>
<svg class="a" style="left:1057px;top:459px" width="9" height="13" viewBox="0 0 9 13"><path d="M1.8 0.6L6.8 6.3L1.8 12" fill="none" stroke="#959595" stroke-width="1.4"/></svg>
<div class="t" style="left:1088px;top:456px;font-size:16px;line-height:20px;color:#333;letter-spacing:-0.25px">Детализация рас…</div>
<div class="t" style="left:1254px;top:456px;font-size:16px;line-height:20px;color:#333;letter-spacing:-0.25px">По заказам</div>
<svg class="a" style="left:1030px;top:491px" width="12" height="12" viewBox="0 0 12 12"><circle cx="6.5" cy="6.5" r="5" fill="none" stroke="#b8b8b8" stroke-width="0.9"/><path d="M4 6.5h5M6.5 4v5" stroke="#707070" stroke-width="1"/></svg>
<svg class="a" style="left:1057px;top:492px" width="9" height="13" viewBox="0 0 9 13"><path d="M1.8 0.6L6.8 6.3L1.8 12" fill="none" stroke="#959595" stroke-width="1.4"/></svg>
<div class="t" style="left:1088px;top:489px;font-size:16px;line-height:20px;color:#333;letter-spacing:-0.25px">Контактное лицо</div>
<div class="t" style="left:1254px;top:489px;font-size:16px;line-height:20px;color:#333;letter-spacing:-0.25px">Соловьев Игорь В…</div>
<svg class="a" style="left:1030px;top:524px" width="12" height="12" viewBox="0 0 12 12"><circle cx="6.5" cy="6.5" r="5" fill="none" stroke="#b8b8b8" stroke-width="0.9"/><path d="M4 6.5h5M6.5 4v5" stroke="#707070" stroke-width="1"/></svg>
<svg class="a" style="left:1057px;top:525px" width="9" height="13" viewBox="0 0 9 13"><path d="M1.8 0.6L6.8 6.3L1.8 12" fill="none" stroke="#959595" stroke-width="1.4"/></svg>
<div class="t" style="left:1088px;top:522px;font-size:16px;line-height:20px;color:#333;letter-spacing:-0.25px">Контрагент</div>
<div class="t" style="left:1254px;top:522px;font-size:16px;line-height:20px;color:#333;letter-spacing:-0.25px">Омега</div>
<div class="a" style="left:1018px;top:551px;width:400px;height:12px;overflow:hidden"><svg class="a" style="left:12px;top:9px" width="12" height="12" viewBox="0 0 12 12"><circle cx="6.5" cy="6.5" r="5" fill="none" stroke="#b8b8b8" stroke-width="0.9"/><path d="M4 6.5h5M6.5 4v5" stroke="#707070" stroke-width="1"/></svg><svg class="a" style="left:39px;top:10px" width="9" height="13" viewBox="0 0 9 13"><path d="M1.8 0.6L6.8 6.3L1.8 12" fill="none" stroke="#959595" stroke-width="1.4"/></svg><div class="t" style="left:70px;top:4px;font-size:16px;line-height:20px;color:#333;letter-spacing:-0.25px">Менеджер</div><div class="t" style="left:236px;top:4px;font-size:16px;line-height:20px;color:#333;letter-spacing:-0.25px">Федоров Борис Му…</div></div>
<div class="a" style="left:1425px;top:227px;width:0;height:0;border-left:2.5px solid transparent;border-right:2.5px solid transparent;border-bottom:4.5px solid #c4c4c4"></div>
<div class="a" style="left:1422px;top:244px;width:10px;height:290px;border-radius:5px;background:#d4d4d4"></div>
<div class="a" style="left:1422px;top:244px;width:10px;height:92px;border-radius:5px;background:#9a9a9a"></div>
<div class="a" style="left:1425px;top:546px;width:0;height:0;border-left:3px solid transparent;border-right:3px solid transparent;border-top:4px solid #555"></div>
<div class="a" style="left:1018px;top:562px;width:400px;height:17px;background:#fff"></div>
<div class="a" style="left:1031px;top:567px;width:0;height:0;border-top:3px solid transparent;border-bottom:3px solid transparent;border-right:4px solid #c8c8c8"></div>
<div class="a" style="left:1046px;top:565px;width:345px;height:10px;border-radius:5px;background:#d4d4d4"></div>
<div class="a" style="left:1046px;top:565px;width:311px;height:10px;border-radius:5px;background:#9a9a9a"></div>
<div class="a" style="left:1404px;top:567px;width:0;height:0;border-top:3px solid transparent;border-bottom:3px solid transparent;border-left:4px solid #555"></div>
<div class="a" style="left:1017px;top:586px;width:420px;height:1px;background:repeating-linear-gradient(90deg,#cfcfcf 0 3px,transparent 3px 6px)"></div>
<div class="a" style="left:1017px;top:591px;width:369px;height:28px;border:1px solid #ababab;border-radius:3px;background:#fff"></div>
<div class="t" style="left:1020px;top:595px;font-size:16px;line-height:20px;color:#bcbcbc;letter-spacing:-0.3px">Найти оператор или функцию...</div>
<svg class="a" style="left:1412px;top:601px" width="12" height="12" viewBox="0 0 12 12" stroke="#555" stroke-width="1.3"><path d="M1.5 1.5l9 9M10.5 1.5l-9 9"/></svg>
<div class="a" style="left:1017px;top:636px;width:420px;height:256px;border:1px solid #a6a6a6;background:#fff"></div>
<svg class="a" style="left:1030px;top:646px" width="12" height="12" viewBox="0 0 12 12"><circle cx="6.5" cy="6.5" r="5" fill="none" stroke="#b8b8b8" stroke-width="0.9"/><path d="M4 6.5h5M6.5 4v5" stroke="#707070" stroke-width="1"/></svg>
<svg class="a" style="left:1052px;top:645px" width="18" height="17" viewBox="0 0 18 17"><path d="M1.2 2.2a1 1 0 0 1 1-1h4.6l2 2h7a1 1 0 0 1 1 1v9.5a1.8 1.8 0 0 1-1.8 1.8H3a1.8 1.8 0 0 1-1.8-1.8z" fill="none" stroke="#999" stroke-width="1.4"/><path d="M1.2 7h15.6" stroke="#999" stroke-width="1.4"/></svg>
<div class="t" style="left:1088px;top:644px;font-size:16px;line-height:20px;color:#333;letter-spacing:-0.12px">Логические операторы и константы</div>
<svg class="a" style="left:1030px;top:679px" width="12" height="12" viewBox="0 0 12 12"><circle cx="6.5" cy="6.5" r="5" fill="none" stroke="#b8b8b8" stroke-width="0.9"/><path d="M4 6.5h5M6.5 4v5" stroke="#707070" stroke-width="1"/></svg>
<svg class="a" style="left:1052px;top:678px" width="18" height="16" viewBox="0 0 18 16"><path d="M8.2 1.2c-1.6-0.4-2.6 0.4-3 2.2L3.4 12.6c-0.4 1.8-1.2 2.4-2.6 2.1" fill="none" stroke="#a0a0a0" stroke-width="1.5"/><path d="M2.6 5.6h5" stroke="#a0a0a0" stroke-width="1.3"/><path d="M8.5 6l6.8 7.6M15.6 6L8.2 13.6" stroke="#a0a0a0" stroke-width="1.7"/></svg>
<div class="t" style="left:1083px;top:677px;font-size:16px;line-height:20px;color:#333;letter-spacing:-0.3px">Числовые функции</div>
<svg class="a" style="left:1030px;top:712px" width="12" height="12" viewBox="0 0 12 12"><circle cx="6.5" cy="6.5" r="5" fill="none" stroke="#b8b8b8" stroke-width="0.9"/><path d="M4 6.5h5M6.5 4v5" stroke="#707070" stroke-width="1"/></svg>
<svg class="a" style="left:1052px;top:711px" width="18" height="16" viewBox="0 0 18 16"><path d="M8.2 1.2c-1.6-0.4-2.6 0.4-3 2.2L3.4 12.6c-0.4 1.8-1.2 2.4-2.6 2.1" fill="none" stroke="#a0a0a0" stroke-width="1.5"/><path d="M2.6 5.6h5" stroke="#a0a0a0" stroke-width="1.3"/><path d="M8.5 6l6.8 7.6M15.6 6L8.2 13.6" stroke="#a0a0a0" stroke-width="1.7"/></svg>
<div class="t" style="left:1084px;top:710px;font-size:16px;line-height:20px;color:#333;letter-spacing:-0.3px">Строковые функции</div>
<svg class="a" style="left:1030px;top:745px" width="12" height="12" viewBox="0 0 12 12"><circle cx="6.5" cy="6.5" r="5" fill="none" stroke="#b8b8b8" stroke-width="0.9"/><path d="M4 6.5h5M6.5 4v5" stroke="#707070" stroke-width="1"/></svg>
<svg class="a" style="left:1052px;top:744px" width="18" height="16" viewBox="0 0 18 16"><path d="M8.2 1.2c-1.6-0.4-2.6 0.4-3 2.2L3.4 12.6c-0.4 1.8-1.2 2.4-2.6 2.1" fill="none" stroke="#a0a0a0" stroke-width="1.5"/><path d="M2.6 5.6h5" stroke="#a0a0a0" stroke-width="1.3"/><path d="M8.5 6l6.8 7.6M15.6 6L8.2 13.6" stroke="#a0a0a0" stroke-width="1.7"/></svg>
<div class="t" style="left:1083px;top:743px;font-size:16px;line-height:20px;color:#333;letter-spacing:-0.3px">Прочие функции</div>
<svg class="a" style="left:1030px;top:778px" width="12" height="12" viewBox="0 0 12 12"><circle cx="6.5" cy="6.5" r="5" fill="none" stroke="#b8b8b8" stroke-width="0.9"/><path d="M4 6.5h5" stroke="#707070" stroke-width="1"/></svg>
<svg class="a" style="left:1052px;top:777px" width="18" height="16" viewBox="0 0 18 16"><path d="M8.2 1.2c-1.6-0.4-2.6 0.4-3 2.2L3.4 12.6c-0.4 1.8-1.2 2.4-2.6 2.1" fill="none" stroke="#a0a0a0" stroke-width="1.5"/><path d="M2.6 5.6h5" stroke="#a0a0a0" stroke-width="1.3"/><path d="M8.5 6l6.8 7.6M15.6 6L8.2 13.6" stroke="#a0a0a0" stroke-width="1.7"/></svg>
<div class="a" style="left:1078px;top:769px;width:231px;height:33px;border:3px solid #f7c51e;background:#fde58e"></div>
<div class="t" style="left:1083px;top:776px;font-size:16px;line-height:20px;color:#333;letter-spacing:-0.5px">Функции для табличных частей</div>
<div class="t" style="left:1106px;top:809px;font-size:16px;line-height:20px;color:#333;letter-spacing:-0.3px">КоличествоСтрок</div>
<div class="t" style="left:1106px;top:842px;font-size:16px;line-height:20px;color:#333;letter-spacing:-0.3px">МаксимумПоКолонке</div>
<div class="a" style="left:1018px;top:870px;width:400px;height:21px;overflow:hidden"><div class="t" style="left:88px;top:4px;font-size:16px;line-height:20px;color:#333;letter-spacing:-0.3px">МинимумПоКолонке</div></div>
<div class="a" style="left:1425px;top:648px;width:0;height:0;border-left:2.5px solid transparent;border-right:2.5px solid transparent;border-bottom:4.5px solid #c4c4c4"></div>
<div class="a" style="left:1422px;top:665px;width:10px;height:198px;border-radius:5px;background:#d4d4d4"></div>
<div class="a" style="left:1422px;top:665px;width:10px;height:138px;border-radius:5px;background:#9a9a9a"></div>
<div class="a" style="left:1425px;top:875px;width:0;height:0;border-left:3px solid transparent;border-right:3px solid transparent;border-top:4.5px solid #555"></div>
</body></html>
